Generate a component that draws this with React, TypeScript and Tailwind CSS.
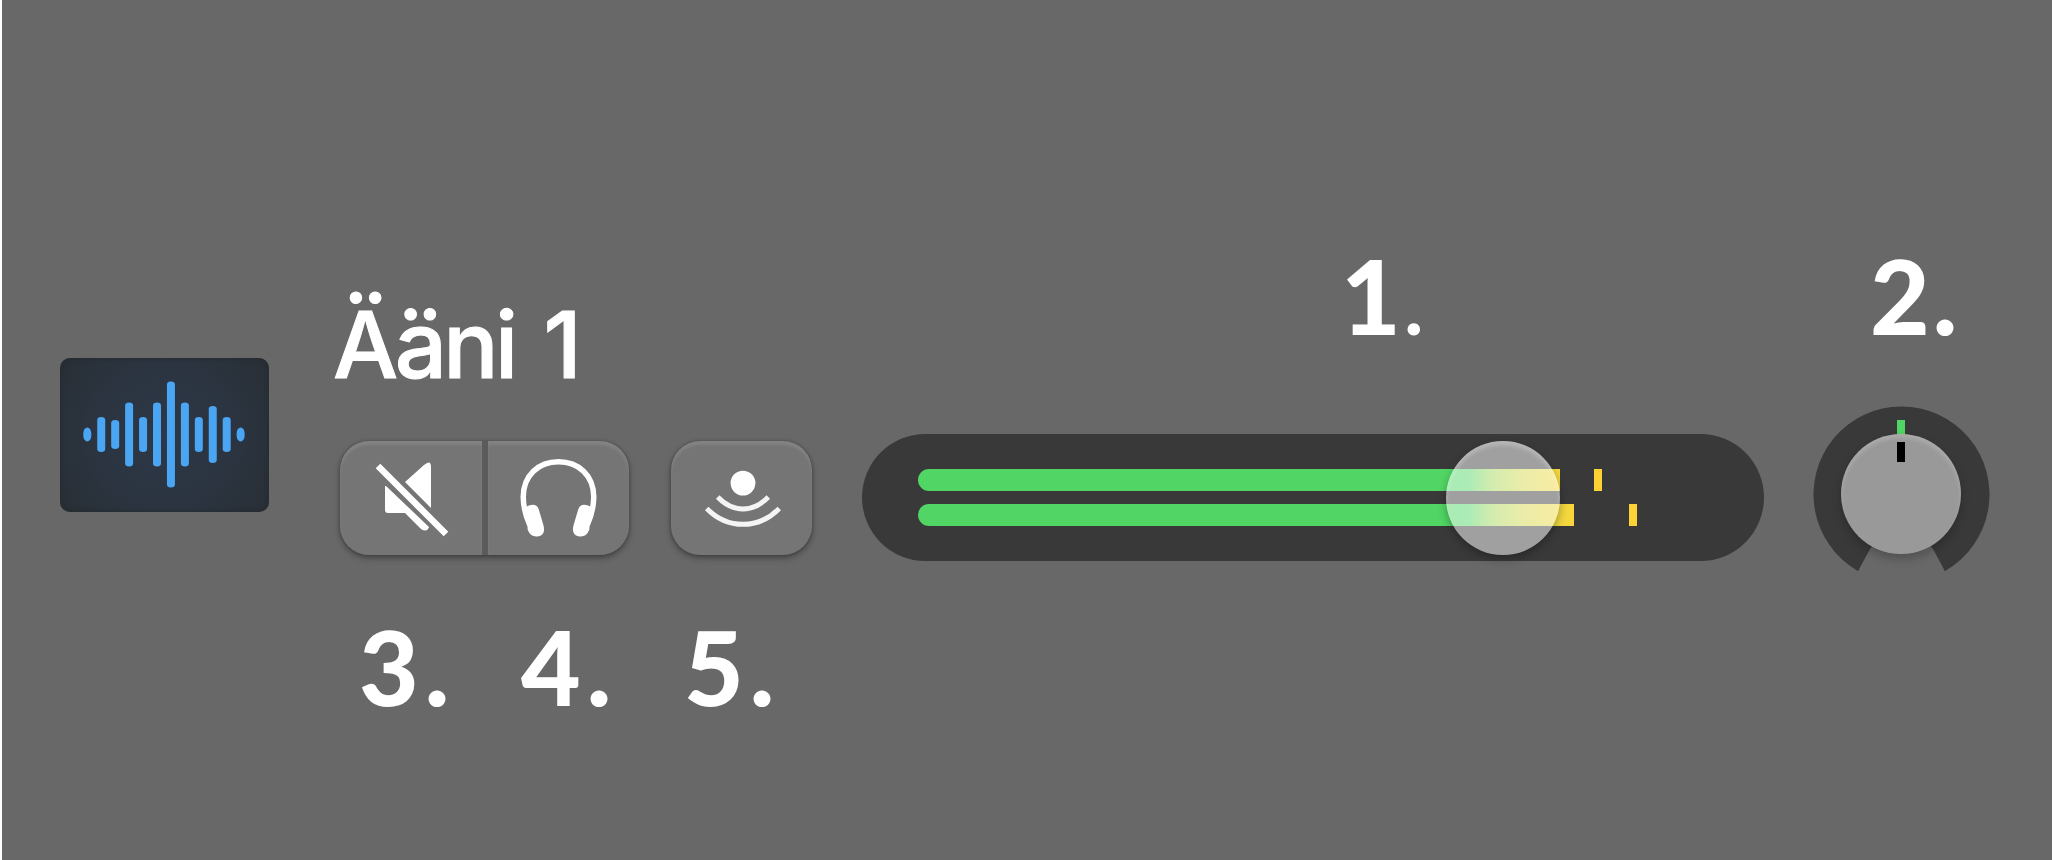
const bars = [14, 35, 29, 64, 35, 64, 106, 64, 35, 57, 35, 14];

function Waveform() {
  return (
    <svg className="h-[154px] w-[209px]" viewBox="0 0 209 154" aria-hidden="true">
      {bars.map((height, index) => (
        <rect
          key={index}
          x={23.3 + index * 13.94}
          y={76.4 - height / 2}
          width="8"
          height={height}
          rx="4"
          ry={height < 20 ? 6 : 3}
          fill="#4aa5f2"
        />
      ))}
    </svg>
  );
}

function MuteIcon() {
  return (
    <svg className="size-full" viewBox="0 0 142 114" aria-hidden="true">
      <path d="M84 24 Q91 18 91 26 V67 L65 41 Z" fill="#fff" />
      <path d="M46 45 L89 86 Q87 92 81 88 L65 72 H48 Q45 72 45 69 V45 Z" fill="#fff" />
      <path d="M38 25 L106 93" stroke="#757575" strokeWidth="12" />
      <path d="M38 25 L106 93" stroke="#fff" strokeWidth="6.5" />
    </svg>
  );
}

function HeadphonesIcon() {
  return (
    <svg className="size-full" viewBox="0 0 142 114" aria-hidden="true">
      <path
        d="M42 84 C37 73 35.500 64 35.500 56 C35.500 34 51 20.500 71 20.500 C91 20.500 106.500 34 106.500 56 C106.500 64 105 73 100 84"
        fill="none"
        stroke="#fff"
        strokeWidth="5.500"
      />
      <path d="M38 66 Q48 61 51 68 L56 85 Q58 94 51 95.500 Q43 97 40 89 Z" fill="#fff" />
      <path d="M104 66 Q94 61 91 68 L86 85 Q84 94 91 95.500 Q99 97 102 89 Z" fill="#fff" />
    </svg>
  );
}

function SpatialIcon() {
  return (
    <svg className="size-full" viewBox="0 0 142 114" aria-hidden="true">
      <circle cx="72.500" cy="42" r="12.500" fill="#fff" />
      <g fill="none" stroke="#f4f4f4" strokeWidth="5">
        <path d="M47 56 Q58.500 68 72.500 68 Q86.500 68 98 56" />
        <path d="M36 67.500 Q51.500 83.500 72.500 83.500 Q93.500 83.500 109 67.500" />
      </g>
    </svg>
  );
}

function PanKnob() {
  return (
    <div className="relative h-[177px] w-[177px]">
      <svg className="absolute inset-0 size-full overflow-visible" viewBox="0 0 177 177" aria-hidden="true">
        <path d="M45 166 A88 88 0 1 1 132 166 L114 130 H63 Z" fill="#393939" />
        <path d="M45 167 L63 130 H114 L132 167 Z" fill="#686868" />
        <path d="M45 166 L57 144 L75 120 L40 120 L20 145 Z" fill="#393939" />
        <path d="M132 166 L120 144 L102 120 L137 120 L157 145 Z" fill="#393939" />
        <rect x="84" y="15" width="8" height="16" fill="#51d564" />
      </svg>
      <div className="absolute top-[29px] left-[28px] size-[120px] rounded-full bg-[#999999] shadow-[0_5px_10px_rgba(0,0,0,0.22),inset_0_4px_4px_rgba(255,255,255,0.18)]">
        <div className="mx-auto mt-[8px] h-[20px] w-[8px] bg-black" />
      </div>
    </div>
  );
}

const buttonClass =
  'h-[114px] bg-[#757575] shadow-[inset_0_4px_3px_rgba(255,255,255,0.1)]';
const numberClass =
  "block font-['Lato',sans-serif] text-[103px] leading-[104px] font-black";

export default function App() {
  return (
    <main className="flex h-[860px] w-[2052px] overflow-hidden border-l-2 border-white bg-[#686868] text-white">
      <div className="mt-[358px] ml-[58px] h-[154px] w-[209px] shrink-0 rounded-[10px] bg-[radial-gradient(circle,#2d3747_0%,#2b3440_55%,#282e34_100%)] shadow-[inset_0_0_4px_#252a2e]">
        <Waveform />
      </div>

      <section className="ml-[65px] w-[479px] shrink-0 pt-[290px]">
        <h1 className="-ml-px h-[151px] font-['Inter',sans-serif] text-[92px] leading-[110px] font-medium tracking-[-3.6px] whitespace-nowrap [word-spacing:8px] [-webkit-text-stroke:1px_white]">
          Ääni 1
        </h1>
        <div className="ml-[6px] flex gap-[42px]">
          <div className="flex gap-[6px] rounded-[29px] bg-[#5b5b5b] shadow-[0_3px_6px_rgba(0,0,0,0.35),0_0_3px_rgba(0,0,0,0.25)]">
            <button className={`${buttonClass} w-[142px] rounded-l-[29px]`} aria-label="Mykistä">
              <MuteIcon />
            </button>
            <button className={`${buttonClass} w-[141px] rounded-r-[29px]`} aria-label="Soolo">
              <HeadphonesIcon />
            </button>
          </div>
          <button
            className="h-[114px] w-[141px] rounded-[29px] bg-[#757575] shadow-[0_3px_6px_rgba(0,0,0,0.35),0_0_3px_rgba(0,0,0,0.25),inset_0_4px_3px_rgba(255,255,255,0.1)]"
            aria-label="Tulon valvonta"
          >
            <SpatialIcon />
          </button>
        </div>
        <div className="mt-[59px] flex pl-[25px]">
          <span className={`${numberClass} w-[162px] tracking-[6px]`}>3.</span>
          <span className={`${numberClass} w-[163px] tracking-[6px]`}>4.</span>
          <span className={`${numberClass} tracking-[6px]`}>5.</span>
        </div>
      </section>

      <section className="ml-[49px] w-[902px] shrink-0 pt-[243px]">
        <div className="h-[191px] pl-[479px]">
          <span className={`${numberClass} tracking-[4px]`}>
            1<span className="text-[76px]">.</span>
          </span>
        </div>
        <div className="relative h-[127px] rounded-full bg-[#393939] pt-[35px] pl-[56px]">
          <div className="flex h-[22px]">
            <div className="w-[642px] rounded-l-full bg-[linear-gradient(90deg,#51d564_0,#51d564_550px,#a5d759_575px,#d4d84b_605px,#f4d63d_642px)]" />
            <div className="ml-[34px] w-[8px] bg-[#fdd237]" />
          </div>
          <div className="mt-[13px] flex h-[22px]">
            <div className="w-[656px] rounded-l-full bg-[linear-gradient(90deg,#51d564_0,#51d564_550px,#a5d759_575px,#d4d84b_605px,#f9d63b_656px)]" />
            <div className="ml-[55px] w-[8px] bg-[#fdd237]" />
          </div>
          <div className="absolute top-[7px] left-[584px] size-[114px] rounded-full bg-white/52 shadow-[0_4px_8px_rgba(0,0,0,0.3),inset_0_4px_4px_rgba(255,255,255,0.25)]" />
        </div>
      </section>

      <section className="ml-[49px] w-[177px] shrink-0 pt-[243px]">
        <div className="h-[162px] pl-[57px]">
          <span className={`${numberClass} tracking-[3px]`}>2.</span>
        </div>
        <PanKnob />
      </section>
    </main>
  );
}
